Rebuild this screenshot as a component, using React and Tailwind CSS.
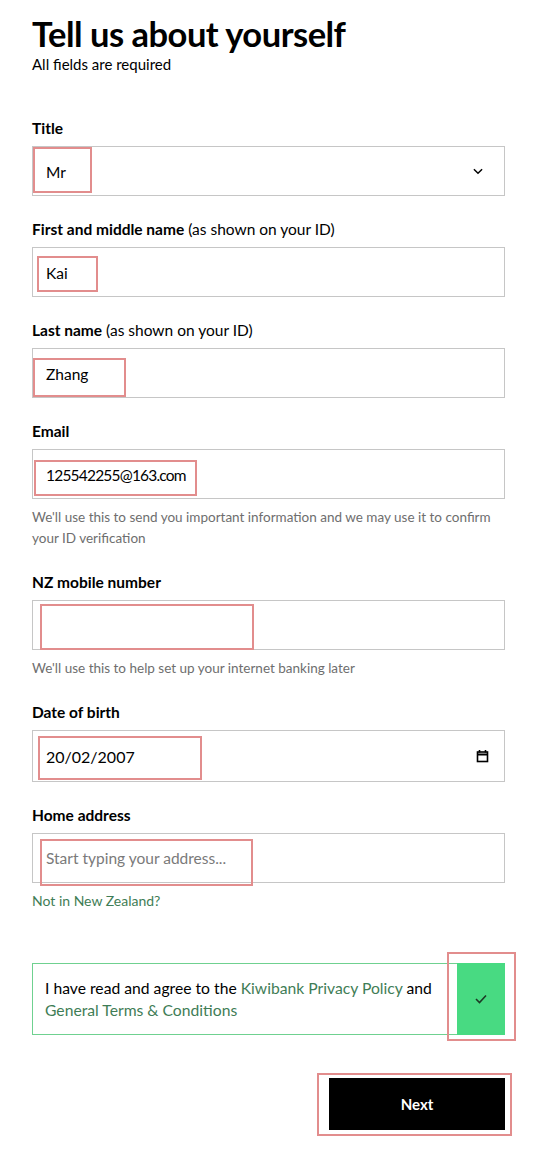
import React from 'react';

const Mark = ({ className }) => (
    <span className={`pointer-events-none absolute border-2 border-[#e28d8d] ${className}`} />
);

const Field = ({ label, hint, children, helper, mark }) => (
    <div className="mb-[23px]">
        <div className="mb-2 text-[15.5px] leading-5 text-black">
            <span className="font-bold">{label}</span>
            {hint && <span> {hint}</span>}
        </div>
        <div className="relative flex h-[50px] items-center border border-[#c6c6c6] bg-white px-[13px] pt-[3px] text-[15.5px] text-black">
            {children}
            {mark}
        </div>
        {helper && (
            <p className="mt-2 text-[13.5px] leading-[21px] text-[#6e6e6e]">{helper}</p>
        )}
    </div>
);

export default function App() {
    return (
        <div className="min-h-[1154px] bg-white pl-8 pt-[14px] font-['Lato',sans-serif]">
            <div className="w-[473px]">
                <h1 className="text-[34.5px] font-bold leading-[40px] tracking-[-0.5px] text-black">
                    Tell us about yourself
                </h1>
                <p className="text-[15px] leading-5 text-black">All fields are required</p>

                <div className="mt-[44px]">
                    <Field
                        label="Title"
                        mark={<Mark className="left-0 top-0 h-[46px] w-[59px]" />}
                    >
                        <span className="flex-1">Mr</span>
                        <svg width="14" height="14" viewBox="0 0 24 24" fill="none" stroke="black" strokeWidth="2.5" className="mr-[6px] -mt-[3px]">
                            <path d="M5 9l7 7 7-7" />
                        </svg>
                    </Field>

                    <Field
                        label="First and middle name"
                        hint="(as shown on your ID)"
                        mark={<Mark className="left-[4px] top-[8px] h-[36px] w-[61px]" />}
                    >
                        Kai
                    </Field>

                    <Field
                        label="Last name"
                        hint="(as shown on your ID)"
                        mark={<Mark className="left-0 top-[9px] h-[39px] w-[93px]" />}
                    >
                        Zhang
                    </Field>

                    <Field
                        label="Email"
                        helper="We'll use this to send you important information and we may use it to confirm your ID verification"
                        mark={<Mark className="left-[1px] top-[10px] h-[36px] w-[163px]" />}
                    >
                        <span className="tracking-[-0.8px]">125542255@163.com</span>
                    </Field>

                    <Field
                        label="NZ mobile number"
                        helper="We'll use this to help set up your internet banking later"
                        mark={<Mark className="left-[7px] top-[3px] h-[46px] w-[214px]" />}
                    />

                    <div className="mb-[23px]">
                        <div className="mb-2 text-[15.5px] font-bold leading-5 text-black">Date of birth</div>
                        <div className="relative flex h-[52px] items-center border border-[#c6c6c6] px-[13px] pt-[2px] text-[16px] text-black">
                            <span className="flex-1">20/02/2007</span>
                            <svg width="13" height="14" viewBox="0 0 13 14" fill="none" stroke="black" strokeWidth="1.6" className="mr-[2px] -mt-[2px]">
                                <rect x="1.5" y="3" width="10" height="9.5" />
                                <path d="M1.5 5.5h10" strokeWidth="2" />
                                <path d="M3.5 1v2.5M9.5 1v2.5" />
                            </svg>
                            <Mark className="left-[5px] top-[5px] h-[44px] w-[164px]" />
                        </div>
                    </div>

                    <div>
                        <div className="mb-2 text-[15.5px] font-bold leading-5 text-black">Home address</div>
                        <div className="relative flex h-[50px] items-center border border-[#c6c6c6] px-[13px] pt-[2px] text-[15.5px] text-[#7a7a7a]">
                            Start typing your address...
                            <Mark className="left-[7px] top-[5px] h-[47px] w-[213px]" />
                        </div>
                        <p className="mt-[8px] text-[14px] leading-5 text-[#3f7d56]">Not in New Zealand?</p>
                    </div>
                </div>

                <div className="mt-[52px] flex min-h-[70px] border border-[#6fd190]">
                    <p className="flex-1 px-[12px] py-[13px] text-[15.7px] leading-[22px] text-black">
                        I have read and agree to the <span className="text-[#3f7d56]">Kiwibank Privacy Policy</span> and{' '}
                        <span className="text-[#3f7d56]">General Terms &amp; Conditions</span>
                    </p>
                    <div className="relative -my-px -mr-px flex w-[48px] items-center justify-center bg-[#48da82]">
                        <svg width="12" height="10" viewBox="0 0 12 10" fill="none" stroke="#1d3a25" strokeWidth="1.6">
                            <path d="M1 5l3.5 3.5L11 1.5" />
                        </svg>
                        <Mark className="-left-[10px] -top-[11px] h-[89px] w-[69px]" />
                    </div>
                </div>

                <div className="mt-[43px] flex justify-end">
                    <button type="button" className="relative h-[52px] w-[176px] bg-black text-[15px] font-bold text-white">
                        Next
                        <Mark className="-left-[12px] -top-[5px] h-[63px] w-[195px]" />
                    </button>
                </div>
            </div>
        </div>
    );
}
